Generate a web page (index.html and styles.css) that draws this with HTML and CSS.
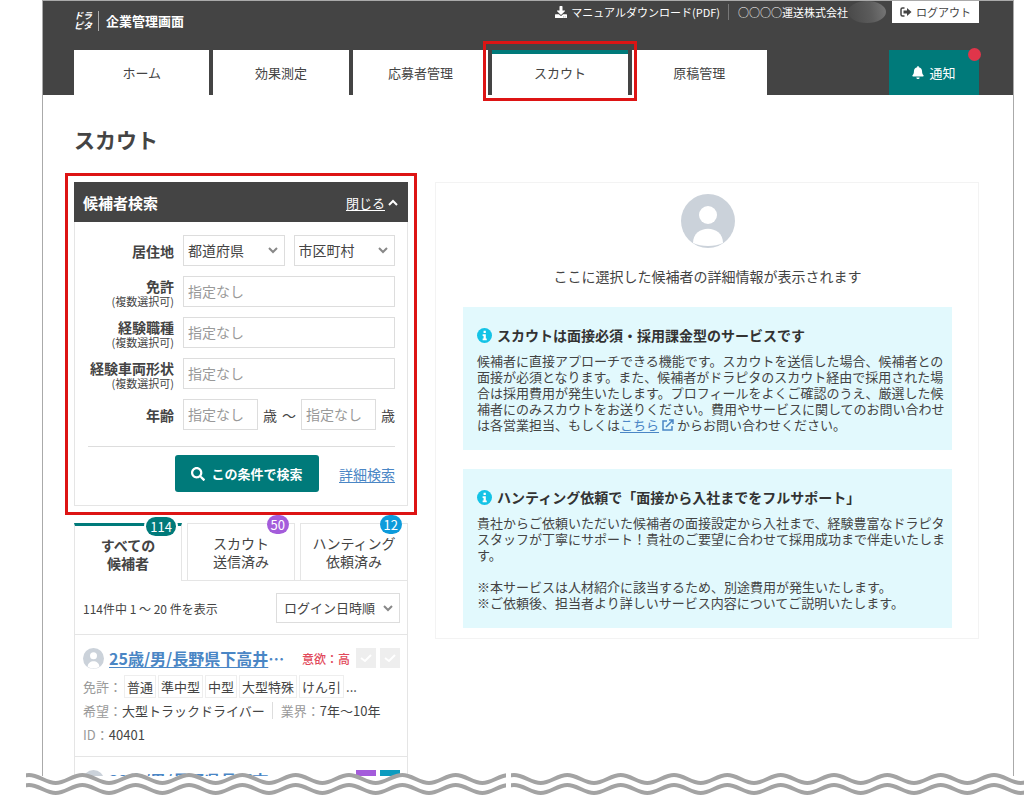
FILE: index.html
```html
<!DOCTYPE html>
<html lang="ja">
<head>
    <meta charset="UTF-8">
    <meta name="viewport" content="width=device-width, initial-scale=1.0">
    <title>スカウト | 企業管理画面</title>
    <link rel="stylesheet" href="styles.css">
</head>
<body>
    <div class="frame">
        <header class="header">
            <div class="header-top">
                <div class="brand">
                    <span class="logo">ドラ<br>ピタ</span>
                    <span class="brand-name">企業管理画面</span>
                </div>
                <div class="account">
                    <a class="manual" href="#">
                        <svg width="12" height="12" viewBox="0 0 512 512" fill="currentColor"><path d="M216 0h80c13.3 0 24 10.7 24 24v168h87.7c17.8 0 26.7 21.5 14.1 34.1L269.7 378.3c-7.5 7.5-19.8 7.5-27.3 0L90.1 226.1c-12.6-12.6-3.7-34.1 14.1-34.1H192V24c0-13.3 10.7-24 24-24zm296 376v112c0 13.3-10.7 24-24 24H24c-13.3 0-24-10.7-24-24V376c0-13.3 10.7-24 24-24h146.7l49 49c20.1 20.1 52.5 20.1 72.6 0l49-49H488c13.3 0 24 10.7 24 24zm-124 88c0-11-9-20-20-20s-20 9-20 20 9 20 20 20 20-9 20-20zm64 0c0-11-9-20-20-20s-20 9-20 20 9 20 20 20 20-9 20-20z"/></svg>
                        マニュアルダウンロード(PDF)
                    </a>
                    <span class="company">○○○○運送株式会社</span>
                    <span class="user-mask"></span>
                    <button type="button" class="logout">
                        <svg width="12" height="10" viewBox="0 0 24 20"><path d="M9 2H5a3 3 0 0 0-3 3v10a3 3 0 0 0 3 3h4" fill="none" stroke="currentColor" stroke-width="3"/><path d="M7 7h7V2l9 8-9 8v-5H7z" fill="currentColor"/></svg>
                        ログアウト
                    </button>
                </div>
            </div>
            <nav class="nav">
                <ul class="nav-list">
                    <li><a href="#">ホーム</a></li>
                    <li><a href="#">効果測定</a></li>
                    <li><a href="#">応募者管理</a></li>
                    <li class="active"><a href="#">スカウト</a></li>
                    <li><a href="#">原稿管理</a></li>
                </ul>
                <button type="button" class="notice">
                    <svg width="12" height="13" viewBox="0 0 448 512" fill="currentColor"><path d="M224 512c35.32 0 63.97-28.65 63.97-64H160.03c0 35.35 28.65 64 63.97 64zm215.39-149.71c-19.32-20.76-55.47-51.99-55.47-154.29 0-77.7-54.48-139.9-127.94-155.16V32c0-17.67-14.32-32-31.98-32s-31.98 14.33-31.98 32v20.84C118.56 68.1 64.08 130.3 64.08 208c0 102.3-36.15 133.53-55.47 154.29-6 6.45-8.66 14.16-8.61 21.71.11 16.4 12.98 32 32.1 32h383.8c19.12 0 32-15.6 32.1-32 .05-7.55-2.61-15.27-8.61-21.71z"/></svg>
                    通知
                    <span class="dot"></span>
                </button>
            </nav>
        </header>

        <main class="main">
            <h1>スカウト</h1>
            <div class="columns">
                <div class="left">
                    <section class="search">
                        <div class="search-head">
                            <h2>候補者検索</h2>
                            <button type="button" class="close"><span>閉じる</span><svg width="10" height="7" viewBox="0 0 10 7" fill="none" stroke="currentColor" stroke-width="2"><path d="M1 6l4-4 4 4"/></svg></button>
                        </div>
                        <form class="search-form">
                            <div class="field">
                                <label for="pref">居住地</label>
                                <div class="controls pair">
                                    <select id="pref"><option>都道府県</option></select>
                                    <select id="city" aria-label="市区町村"><option>市区町村</option></select>
                                </div>
                            </div>
                            <div class="field">
                                <label for="license">免許<small>(複数選択可)</small></label>
                                <input type="text" id="license" placeholder="指定なし">
                            </div>
                            <div class="field">
                                <label for="job">経験職種<small>(複数選択可)</small></label>
                                <input type="text" id="job" placeholder="指定なし">
                            </div>
                            <div class="field">
                                <label for="vehicle">経験車両形状<small>(複数選択可)</small></label>
                                <input type="text" id="vehicle" placeholder="指定なし">
                            </div>
                            <div class="field">
                                <label for="age-from">年齢</label>
                                <div class="controls age">
                                    <input type="text" id="age-from" placeholder="指定なし">
                                    <span>歳</span>
                                    <span>～</span>
                                    <input type="text" id="age-to" aria-label="年齢の上限" placeholder="指定なし">
                                    <span>歳</span>
                                </div>
                            </div>
                            <div class="actions">
                                <button type="submit" class="submit">
                                    <svg width="14" height="14" viewBox="0 0 512 512" fill="currentColor"><path d="M505 442.7L405.3 343c-4.5-4.5-10.6-7-17-7H372c27.6-35.3 44-79.7 44-128C416 93.1 322.9 0 208 0S0 93.1 0 208s93.1 208 208 208c48.3 0 92.7-16.4 128-44v16.3c0 6.4 2.5 12.5 7 17l99.7 99.7c9.4 9.4 24.6 9.4 33.9 0l28.3-28.3c9.4-9.4 9.4-24.6.1-34zM208 336c-70.7 0-128-57.2-128-128 0-70.7 57.2-128 128-128 70.7 0 128 57.2 128 128 0 70.7-57.2 128-128 128z"/></svg>
                                    この条件で検索
                                </button>
                                <a href="#">詳細検索</a>
                            </div>
                        </form>
                    </section>

                    <div class="tabs">
                        <button type="button" class="tab current">すべての<br>候補者<span class="badge">114</span></button>
                        <button type="button" class="tab">スカウト<br>送信済み<span class="badge purple">50</span></button>
                        <button type="button" class="tab">ハンティング<br>依頼済み<span class="badge blue">12</span></button>
                    </div>

                    <section class="results">
                        <div class="results-head">
                            <span>114件中 1 ～ 20 件を表示</span>
                            <select aria-label="並び順"><option>ログイン日時順</option></select>
                        </div>
                        <article class="candidate">
                            <div class="candidate-head">
                                <svg class="face" width="21" height="21" viewBox="0 0 54 54"><circle cx="27" cy="27" r="27" fill="#cbd2da"/><circle cx="27" cy="20" r="9" fill="#fff"/><path d="M12 48c0-19 30-19 30 0-8 6-22 6-30 0z" fill="#fff"/></svg>
                                <span class="name"><a href="#">25歳/男/長野県下高井</a>…</span>
                                <span class="will">意欲：高</span>
                                <span class="mark"><svg width="12" height="9" viewBox="0 0 12 9"><path d="M1 4l4 3 6-6"/></svg></span>
                                <span class="mark"><svg width="12" height="9" viewBox="0 0 12 9"><path d="M1 4l4 3 6-6"/></svg></span>
                            </div>
                            <div class="line chips">
                                <span class="term">免許：</span>
                                <span class="chip">普通</span>
                                <span class="chip">準中型</span>
                                <span class="chip">中型</span>
                                <span class="chip">大型特殊</span>
                                <span class="chip">けん引</span>
                                <span>...</span>
                            </div>
                            <div class="line">
                                <span class="term">希望：</span>
                                <span>大型トラックドライバー</span>
                                <span class="term split">業界：</span>
                                <span>7年～10年</span>
                            </div>
                            <div class="line"><span class="term">ID：</span><span>40401</span></div>
                        </article>
                        <article class="candidate cut">
                            <div class="candidate-head">
                                <svg class="face" width="21" height="21" viewBox="0 0 54 54"><circle cx="27" cy="27" r="27" fill="#cbd2da"/></svg>
                                <span class="name"><a href="#">32歳/男/長野県長野市</a>…</span>
                                <span class="mark sent"></span>
                                <span class="mark hunted"></span>
                            </div>
                        </article>
                    </section>
                </div>

                <section class="detail">
                    <svg class="avatar" width="54" height="54" viewBox="0 0 54 54"><circle cx="27" cy="27" r="27" fill="#cbd2da"/><circle cx="27" cy="21" r="9" fill="#fff"/><path d="M12 49c0-19 30-19 30 0-8 4-22 4-30 0z" fill="#fff"/></svg>
                    <p class="empty">ここに選択した候補者の詳細情報が表示されます</p>
                    <div class="info">
                        <h3>
                            <svg width="15" height="15" viewBox="0 0 16 16"><circle cx="8" cy="8" r="8" fill="#14c3e6"/><path d="M7 3h2.4v2.2H7zM6 6.6h3.4v4.6h1V13H6v-1.8h1V8.4H6z" fill="#fff"/></svg>
                            スカウトは面接必須・採用課金型のサービスです
                        </h3>
                        <p>候補者に直接アプローチできる機能です。スカウトを送信した場合、候補者との面接が必須となります。また、候補者がドラピタのスカウト経由で採用された場合は採用費用が発生いたします。プロフィールをよくご確認のうえ、厳選した候補者にのみスカウトをお送りください。費用やサービスに関してのお問い合わせは各営業担当、もしくは<a href="#">こちら</a><svg class="external" width="12" height="12" viewBox="0 0 12 12" fill="none" stroke="currentColor" stroke-width="1.5"><path d="M5 2H1v9h9V7M4 8l7-7M7 1h4v4"/></svg>からお問い合わせください。</p>
                    </div>
                    <div class="info">
                        <h3>
                            <svg width="15" height="15" viewBox="0 0 16 16"><circle cx="8" cy="8" r="8" fill="#14c3e6"/><path d="M7 3h2.4v2.2H7zM6 6.6h3.4v4.6h1V13H6v-1.8h1V8.4H6z" fill="#fff"/></svg>
                            ハンティング依頼で「面接から入社までをフルサポート」
                        </h3>
                        <p>貴社からご依頼いただいた候補者の面接設定から入社まで、経験豊富なドラピタスタッフが丁寧にサポート！貴社のご要望に合わせて採用成功まで伴走いたします。</p>
                        <p class="note">※本サービスは人材紹介に該当するため、別途費用が発生いたします。<br>※ご依頼後、担当者より詳しいサービス内容についてご説明いたします。</p>
                    </div>
                </section>
            </div>
        </main>
    </div>

    <!-- 省略を示す波線 -->
    <div class="tear">
        <svg class="tear-left" height="30">
            <defs>
                <pattern id="wave" x="3" y="0" width="160" height="30" patternUnits="userSpaceOnUse">
                    <path fill="#fff" d="M0 3C9.7 3 17 11 26.7 11S43.6 3 53.3 3 70.3 11 80 11 97 3 106.7 3 123.6 11 133.3 11 150.3 3 160 3V30H0z"/>
                    <path class="wave-line" d="M0 3C9.7 3 17 11 26.7 11S43.6 3 53.3 3 70.3 11 80 11 97 3 106.7 3 123.6 11 133.3 11 150.3 3 160 3"/>
                    <path class="wave-line" d="M0 13C9.7 13 17 21 26.7 21S43.6 13 53.3 13 70.3 21 80 21 97 13 106.7 13 123.6 21 133.3 21 150.3 13 160 13"/>
                </pattern>
            </defs>
            <rect width="100%" height="30" fill="url(#wave)"/>
        </svg>
        <svg class="tear-right" height="30"><rect width="100%" height="30" fill="url(#wave)"/></svg>
    </div>
</body>
</html>
```
FILE: styles.css
```css
* {
    box-sizing: border-box;
}
body {
    margin: 0;
    background-color: #fff;
    color: #444;
    font-family: "Noto Sans CJK JP", sans-serif;
    font-size: 13px;
}
h1, h2, h3, p, ul {
    margin: 0;
    padding: 0;
}
button, input, select {
    font-family: inherit;
    color: inherit;
}
button {
    cursor: pointer;
}
a {
    color: #4a86c5;
    text-underline-offset: 2px;
}
svg {
    flex: none;
}
.frame {
    margin: 0 10px 0 42px;
    border: 1px solid #aaa;
    border-bottom: none;
}

/* ヘッダー */
.header {
    padding: 0 34px 0 31px;
    background-color: #444;
}
.header-top {
    display: flex;
    justify-content: space-between;
    align-items: flex-start;
    height: 49px;
    color: #fff;
}
.brand {
    display: flex;
    align-items: center;
    padding-top: 10px;
}
.logo {
    padding-right: 6px;
    border-right: 1px solid #aaa;
    font-size: 9px;
    font-style: italic;
    font-weight: bold;
    line-height: 10px;
}
.brand-name {
    margin-left: 7px;
    font-weight: bold;
    line-height: 20px;
}
.account {
    display: flex;
    align-items: center;
    font-size: 11px;
    line-height: 22px;
}
.manual {
    display: flex;
    align-items: center;
    gap: 4px;
    color: #fff;
    text-decoration: none;
}
.company {
    margin-left: 8px;
    padding-left: 9px;
    border-left: 1px solid #777;
    line-height: 16px;
}
.user-mask {
    width: 38px;
    height: 22px;
    border-radius: 50%;
    background: linear-gradient(80deg, #484848, #5c5c5c 60%, #777);
}
.logout {
    display: flex;
    align-items: center;
    gap: 4px;
    height: 22px;
    margin-left: 6px;
    padding: 0 8px;
    border: none;
    background-color: #fff;
    color: #444;
    font-size: 11px;
}
.nav {
    display: flex;
    justify-content: space-between;
}
.nav-list {
    display: flex;
    flex: 0 1 693px;
    gap: 4px;
    list-style: none;
}
.nav-list li {
    flex: 1;
}
.nav-list a {
    display: block;
    border-top: 4px solid #fff;
    background-color: #fff;
    color: #444;
    line-height: 37px;
    padding-bottom: 4px;
    text-align: center;
    text-decoration: none;
}
.nav-list .active {
    position: relative;
    z-index: 1;
}
.nav-list .active a {
    border-top-color: #007a7a;
}
.nav-list .active::after {
    content: "";
    position: absolute;
    inset: -9px -9px -6px;
    border: 3px solid #dd1414;
    pointer-events: none;
}
.notice {
    position: relative;
    display: flex;
    align-items: center;
    justify-content: center;
    gap: 5px;
    width: 90px;
    border: none;
    background-color: #007a7a;
    color: #fff;
    font-size: 13px;
}
.dot {
    position: absolute;
    top: -2px;
    right: -2px;
    width: 13px;
    height: 13px;
    border-radius: 50%;
    background-color: #e0354a;
}

/* 本文 */
.main {
    padding: 29px 34px 0 31px;
}
h1 {
    margin-bottom: 28px;
    font-size: 21px;
    line-height: 30px;
}
.columns {
    display: grid;
    grid-template-columns: 334px 1fr;
    align-items: start;
    gap: 27px;
}

/* 検索フォーム */
.search {
    border: 1px solid #e5e5e5;
    border-top: none;
    outline: 3px solid #dd1414;
    outline-offset: 6px;
}
.search-head {
    display: flex;
    align-items: center;
    justify-content: space-between;
    height: 40px;
    margin: 0 -1px;
    padding: 0 10px 0 9px;
    background-color: #444;
    color: #fff;
}
.search-head h2 {
    font-size: 15px;
}
.close {
    display: flex;
    align-items: center;
    gap: 3px;
    padding: 0;
    border: none;
    background: none;
    font-size: 13px;
}
.close span {
    text-decoration: underline;
    text-underline-offset: 2px;
}
.search-form {
    display: flex;
    flex-direction: column;
    gap: 10px;
    padding: 13px 12px 13px 13px;
}
.field {
    display: grid;
    grid-template-columns: 1fr 212px;
    align-items: center;
    gap: 9px;
}
.field label {
    font-size: 14px;
    font-weight: bold;
    line-height: 18px;
    text-align: right;
    white-space: nowrap;
}
.field small {
    display: block;
    font-size: 11px;
    font-weight: normal;
    line-height: 12px;
}
input, select {
    width: 100%;
    min-width: 0;
    height: 31px;
    padding: 0 4px 2px;
    border: 1px solid #ddd;
    border-radius: 0;
    background-color: #fff;
    font-size: 14px;
}
input::placeholder {
    color: #999;
}
select {
    appearance: none;
    background-image: url("data:image/svg+xml,%3Csvg xmlns='http://www.w3.org/2000/svg' width='10' height='7' fill='none' stroke='%23888' stroke-width='2'%3E%3Cpath d='M1 1l4 4 4-4'/%3E%3C/svg%3E");
    background-position: right 6px center;
    background-repeat: no-repeat;
}
.controls {
    display: flex;
    align-items: center;
    font-size: 14px;
    line-height: 18px;
}
.pair {
    gap: 9px;
}
.age {
    gap: 5px;
}
.age span {
    flex: none;
}
.actions {
    display: flex;
    align-items: center;
    justify-content: flex-end;
    gap: 20px;
    margin-top: 6px;
    padding-top: 8px;
    border-top: 1px solid #ddd;
    font-size: 14px;
}
.submit {
    display: flex;
    align-items: center;
    justify-content: center;
    gap: 6px;
    width: 144px;
    height: 37px;
    padding: 0;
    border: none;
    border-radius: 3px;
    background-color: #007a7a;
    color: #fff;
    font-size: 13px;
    font-weight: bold;
}

/* 候補者一覧 */
.tabs {
    display: flex;
    gap: 5px;
    margin-top: 17px;
    border-bottom: 1px solid #e5e5e5;
}
.tab {
    position: relative;
    display: flex;
    flex: 1;
    align-items: flex-start;
    justify-content: center;
    height: 57px;
    padding: 10px 0 0;
    border: 1px solid #e5e5e5;
    border-bottom: none;
    background-color: #fff;
    font-size: 14px;
    line-height: 18px;
}
.tab.current {
    margin-bottom: -1px;
    height: 58px;
    border-top: 3px solid #007a7a;
    font-weight: bold;
}
.badge {
    position: absolute;
    top: -9px;
    right: 5px;
    padding: 0 4px;
    border-radius: 10px;
    background-color: #007a7a;
    color: #fff;
    font-size: 13px;
    font-weight: normal;
    line-height: 19px;
}
.tab.current .badge {
    box-shadow: 0 0 0 2px #fff;
}
.badge.purple {
    background-color: #a45cdb;
}
.badge.blue {
    background-color: #0d9bdb;
}
.results {
    border: 1px solid #e5e5e5;
    border-top: none;
    border-bottom: none;
}
.results-head {
    display: flex;
    align-items: center;
    justify-content: space-between;
    padding: 12px 7px 11px 8px;
    font-size: 12px;
}
.results-head select {
    width: 124px;
    height: 30px;
    padding: 0 7px 2px;
    font-size: 13px;
}
.candidate {
    padding: 12px 7px 10px 8px;
    border-top: 1px solid #e5e5e5;
}
.candidate.cut {
    height: 20px;
    padding-bottom: 0;
    overflow: hidden;
}
.candidate-head {
    display: flex;
    align-items: center;
    height: 22px;
    margin-bottom: 5px;
}
.name {
    flex: 1;
    margin-left: 5px;
    color: #4a86c5;
    font-size: 16px;
    font-weight: bold;
    white-space: nowrap;
}
.will {
    margin-right: 2px;
    color: #e2495b;
    font-size: 12px;
    font-weight: 500;
}
.mark {
    display: flex;
    align-items: center;
    justify-content: center;
    width: 20px;
    height: 20px;
    margin-left: 4px;
    background-color: #eee;
}
.mark path {
    fill: none;
    stroke: #fff;
    stroke-width: 2;
}
.mark.sent {
    background-color: #a45cdb;
}
.mark.hunted {
    background-color: #0d9bbf;
}
.line {
    display: flex;
    align-items: center;
    height: 24px;
    white-space: nowrap;
}
.chips {
    gap: 2px;
}
.term {
    color: #999;
}
.chip {
    padding: 0 2px;
    border: 1px solid #eee;
    line-height: 21px;
}
.split {
    margin-left: 7px;
    padding-left: 8px;
    border-left: 1px solid #ddd;
    line-height: 17px;
}

/* 詳細エリア */
.detail {
    padding: 11px 26px 10px 27px;
    border: 1px solid #f3f3f3;
}
.avatar {
    display: block;
    margin: 0 auto;
}
.empty {
    margin: 18px 0 21px;
    font-size: 14px;
    line-height: 20px;
    text-align: center;
}
.info {
    padding: 17px 6px 17px 14px;
    background-color: #e2f9fd;
}
.info + .info {
    margin-top: 19px;
}
.info h3 {
    display: flex;
    align-items: center;
    gap: 5px;
    margin-bottom: 7px;
    color: #333;
    font-size: 14px;
    line-height: 22px;
}
.info p {
    line-height: 16px;
}
.info .note {
    margin-top: 16px;
}
.external {
    margin: 0 3px;
    color: #4a86c5;
    vertical-align: -1px;
}

/* 波線 */
.tear {
    position: relative;
    display: flex;
    gap: 5px;
    margin: -4px 0 0 26px;
}
.tear-left {
    flex: 480 1 0;
    min-width: 0;
}
.tear-right {
    flex: 513 1 0;
    min-width: 0;
}
.wave-line {
    fill: none;
    stroke: #a3a3a3;
    stroke-width: 4;
}
```
